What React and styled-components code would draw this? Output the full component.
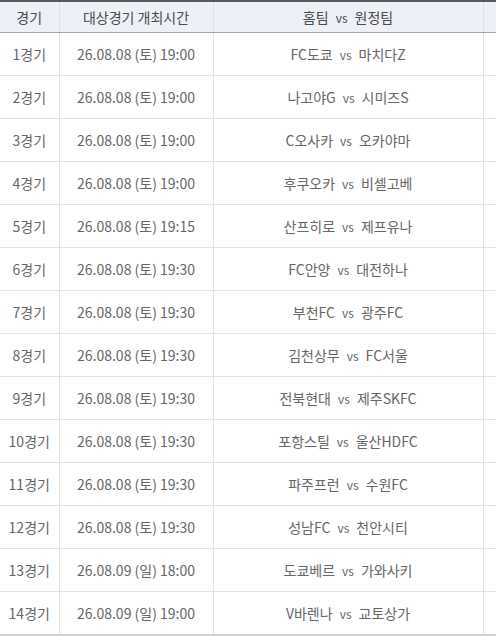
import React from "react";
import styled, { createGlobalStyle } from "styled-components";

const GlobalStyle = createGlobalStyle`
  html, body {
    margin: 0;
    padding: 0;
    background: #fff;
  }
  body {
    font-family: "Noto Sans CJK KR", "Noto Sans", sans-serif;
  }
`;

const matches = [
  ["1경기", "26.08.08 (토) 19:00", "FC도쿄", "마치다Z"],
  ["2경기", "26.08.08 (토) 19:00", "나고야G", "시미즈S"],
  ["3경기", "26.08.08 (토) 19:00", "C오사카", "오카야마"],
  ["4경기", "26.08.08 (토) 19:00", "후쿠오카", "비셀고베"],
  ["5경기", "26.08.08 (토) 19:15", "산프히로", "제프유나"],
  ["6경기", "26.08.08 (토) 19:30", "FC안양", "대전하나"],
  ["7경기", "26.08.08 (토) 19:30", "부천FC", "광주FC"],
  ["8경기", "26.08.08 (토) 19:30", "김천상무", "FC서울"],
  ["9경기", "26.08.08 (토) 19:30", "전북현대", "제주SKFC"],
  ["10경기", "26.08.08 (토) 19:30", "포항스틸", "울산HDFC"],
  ["11경기", "26.08.08 (토) 19:30", "파주프런", "수원FC"],
  ["12경기", "26.08.08 (토) 19:30", "성남FC", "천안시티"],
  ["13경기", "26.08.09 (일) 18:00", "도쿄베르", "가와사키"],
  ["14경기", "26.08.09 (일) 19:00", "V바렌나", "교토상가"],
];

const Table = styled.table`
  width: 496px;
  border-collapse: collapse;
  table-layout: fixed;
  border-top: 2px solid #5a5a5a;
  border-bottom: 2px solid #d4d4d4;
  color: #666;
  font-size: 14px;
`;

const Th = styled.th`
  height: 30px;
  padding: 0;
  background: #eef0f8;
  font-weight: 400;
  color: #4a4a4a;
  text-align: center;
  border-bottom: 1px solid #a8a8a8;
  border-right: 1px solid #e0e0e0;
  &:last-child {
    border-right: none;
  }
`;

const Td = styled.td`
  height: 42px;
  padding: 0;
  text-align: center;
  border-bottom: 1px solid #e2e2e2;
  border-right: 1px solid #e2e2e2;
  &:last-child {
    border-right: none;
  }
`;

const Vs = styled.span`
  font-size: 12px;
  margin: 0 7px;
`;

export default function App() {
  return (
    <>
      <GlobalStyle />
      <Table>
        <colgroup>
          <col style={{ width: 59 }} />
          <col style={{ width: 154 }} />
          <col style={{ width: 270 }} />
          <col />
        </colgroup>
        <thead>
          <tr>
            <Th>경기</Th>
            <Th>대상경기 개최시간</Th>
            <Th>
              홈팀<Vs>vs</Vs>원정팀
            </Th>
            <Th />
          </tr>
        </thead>
        <tbody>
          {matches.map(([no, time, home, away]) => (
            <tr key={no}>
              <Td>{no}</Td>
              <Td>{time}</Td>
              <Td>
                {home}
                <Vs>vs</Vs>
                {away}
              </Td>
              <Td />
            </tr>
          ))}
        </tbody>
      </Table>
    </>
  );
}
